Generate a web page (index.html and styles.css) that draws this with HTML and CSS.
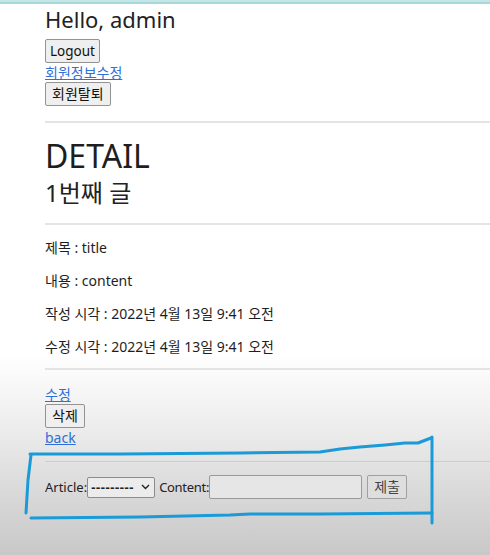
FILE: index.html
```html
<!DOCTYPE html>
<html lang="ko">
<head>
<meta charset="utf-8">
<link rel="stylesheet" href="styles.css">
</head>
<body>
<div class="topbar"></div>
<main class="page">
  <h2 class="hello">Hello, admin</h2>
  <div class="stack">
    <button class="btn btn-latin">Logout</button>
    <a class="link" href="#">회원정보수정</a>
    <button class="btn">회원탈퇴</button>
  </div>
  <hr class="rule rule-1">
  <h1 class="title">DETAIL</h1>
  <h3 class="subtitle">1번째 글</h3>
  <hr class="rule rule-2">
  <div class="fields">
    <p>제목 : title</p>
    <p>내용 : content</p>
    <p>작성 시각 : 2022년 4월 13일 9:41 오전</p>
    <p>수정 시각 : 2022년 4월 13일 9:41 오전</p>
  </div>
  <hr class="rule rule-3">
  <div class="stack actions">
    <a class="link" href="#">수정</a>
    <button class="btn">삭제</button>
    <a class="link" href="#">back</a>
  </div>
  <hr class="rule rule-4">
  <form class="comment">
    <label>Article:</label>
    <span class="select"><span class="dashes">---------</span><svg width="9" height="6" viewBox="0 0 9 6"><path d="M1 1 L4.5 4.5 L8 1" fill="none" stroke="#222" stroke-width="1.4"/></svg></span>
    <label class="content-label">Content:</label>
    <span class="input"></span>
    <button type="button" class="btn submit">제출</button>
  </form>
</main>
<svg class="annotation" width="490" height="555" viewBox="0 0 490 555">
  <path d="M31 455 L28 480 L26 513" />
  <path d="M30 454 L120 454 L240 453 L320 452 L340 449 L360 447 L385 445 L405 443 L418 443 L431 438" />
  <path d="M432 437 L432 480 L432 523" />
  <path d="M31 518 L140 517 L230 515 L250 514 L320 514 L432 513" />
</svg>
</body>
</html>
```

FILE: styles.css
```css
html {
  background: linear-gradient(to bottom, #ffffff 0px, #ffffff 355px, #ececec 430px, #dadada 490px, #c8c8c8 555px);
  min-height: 100%;
}
body {
  margin: 0;
  width: 490px;
  height: 555px;
  overflow: hidden;
  position: relative;
  font-family: "Noto Sans", "Noto Sans CJK KR", sans-serif;
  color: #1e1e1e;
}
.topbar {
  height: 4px;
  background: linear-gradient(to bottom, #c4e6e6 0, #c4e6e6 2px, #a7d7d8 2px, #a7d7d8 4px);
}
.page {
  padding-left: 45px;
}
.hello {
  margin: 0;
  font-size: 22px;
  font-weight: 400;
  line-height: 30px;
  color: #222;
}
.stack {
  display: flex;
  flex-direction: column;
  align-items: flex-start;
}
.stack:first-of-type {
  margin-top: 5px;
}
.btn {
  font-family: "Noto Sans", "Noto Sans CJK KR", sans-serif;
  font-size: 14px;
  color: #111;
  background: #efefef;
  border: 1px solid #939393;
  border-radius: 2px;
  height: 24px;
  padding: 0 6px;
  line-height: 20px;
}
.btn-latin {
  padding: 0 4px;
  font-size: 13.5px;
}
.link {
  color: #2f6fd6;
  font-size: 14px;
  line-height: 19px;
  text-decoration: underline;
}
.rule {
  border: 0;
  border-top: 2px solid #e4e4e4;
  margin: 0 -10px 0 0;
}
.rule-1 { margin-top: 15px; }
.title {
  margin: 14px 0 0;
  font-size: 32px;
  font-weight: 400;
  line-height: 38px;
  color: #1e1e1e;
}
.subtitle {
  margin: 2px 0 0;
  font-size: 24px;
  font-weight: 400;
  line-height: 32px;
  color: #222;
}
.rule-2 { margin-top: 14px; }
.fields {
  padding-top: 6px;
}
.fields p {
  margin: 0;
  font-size: 14px;
  line-height: 33px;
}
.rule-3 { margin-top: 5px; }
.actions { margin-top: 15px; }
.rule-4 {
  margin-top: 14px;
  border-top-color: #cdcdcd;
  border-top-width: 1px;
}
.comment {
  display: flex;
  align-items: center;
  margin-top: 13px;
  font-size: 13px;
  color: #222;
}
.select {
  display: inline-flex;
  align-items: center;
  justify-content: space-between;
  width: 68px;
  height: 21px;
  box-sizing: border-box;
  border: 1px solid #8c8c8c;
  border-radius: 2px;
  padding: 0 4px 0 3px;
  color: #222;
  background: #ececec;
}
.dashes {
  font-weight: 700;
  letter-spacing: 0.6px;
}
.content-label { margin-left: 4px; letter-spacing: -0.3px; }
.input {
  width: 153px;
  height: 24px;
  box-sizing: border-box;
  border: 1px solid #9a9a9a;
  border-radius: 2px;
  background: #e6e6e6;
}
.submit {
  margin-left: 5px;
  width: 40px;
  padding: 0;
  color: #444;
  background: #dedede;
  border-color: #a0a0a0;
}
.annotation {
  position: absolute;
  left: 0;
  top: 0;
  pointer-events: none;
  fill: none;
  stroke: #1a9bd7;
  stroke-width: 3;
  stroke-linecap: round;
  stroke-linejoin: round;
}
```
